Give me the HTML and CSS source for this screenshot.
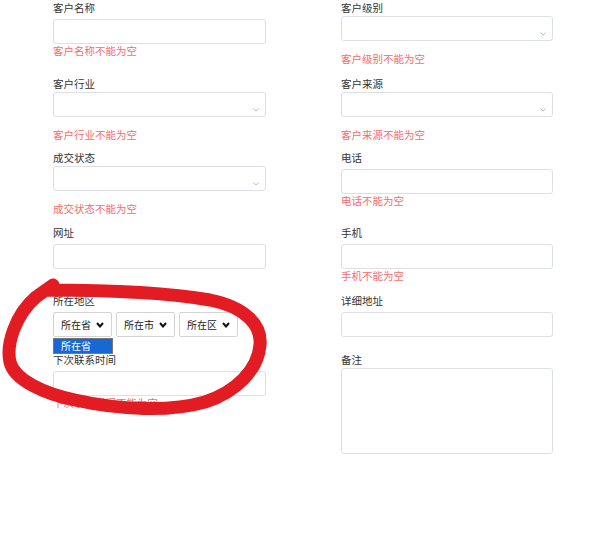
FILE: index.html
```html
<!DOCTYPE html>
<html lang="zh-CN">
<head>
<meta charset="utf-8">
<title>客户信息</title>
<link rel="stylesheet" href="styles.css">
</head>
<body>
<div class="page">
  <form class="form">
    <div class="field">
      <label class="label">客户名称</label>
      <div class="ctl input"></div>
      <div class="err">客户名称不能为空</div>
    </div>
    <div class="field">
      <label class="label">客户级别</label>
      <div class="ctl select"><svg class="arrow" width="6" height="4" viewBox="0 0 6 4"><polyline points="0.5,0.5 3,3.2 5.5,0.5" fill="none" stroke="#b8bcc4" stroke-width="1"/></svg></div>
      <div class="err err-select">客户级别不能为空</div>
    </div>

    <div class="field">
      <label class="label">客户行业</label>
      <div class="ctl select"><svg class="arrow" width="6" height="4" viewBox="0 0 6 4"><polyline points="0.5,0.5 3,3.2 5.5,0.5" fill="none" stroke="#b8bcc4" stroke-width="1"/></svg></div>
      <div class="err err-select">客户行业不能为空</div>
    </div>
    <div class="field">
      <label class="label">客户来源</label>
      <div class="ctl select"><svg class="arrow" width="6" height="4" viewBox="0 0 6 4"><polyline points="0.5,0.5 3,3.2 5.5,0.5" fill="none" stroke="#b8bcc4" stroke-width="1"/></svg></div>
      <div class="err err-select">客户来源不能为空</div>
    </div>

    <div class="field">
      <label class="label">成交状态</label>
      <div class="ctl select"><svg class="arrow" width="6" height="4" viewBox="0 0 6 4"><polyline points="0.5,0.5 3,3.2 5.5,0.5" fill="none" stroke="#b8bcc4" stroke-width="1"/></svg></div>
      <div class="err err-select">成交状态不能为空</div>
    </div>
    <div class="field">
      <label class="label">电话</label>
      <div class="ctl input"></div>
      <div class="err">电话不能为空</div>
    </div>

    <div class="field">
      <label class="label">网址</label>
      <div class="ctl input"></div>
    </div>
    <div class="field">
      <label class="label">手机</label>
      <div class="ctl input"></div>
      <div class="err">手机不能为空</div>
    </div>

    <div class="field">
      <label class="label">所在地区</label>
      <div class="region">
        <div class="rsel"><span>所在省</span><svg width="8" height="6" viewBox="0 0 8 6"><polyline points="1,1 4,4.5 7,1" fill="none" stroke="#111" stroke-width="2"/></svg></div>
        <div class="rsel"><span>所在市</span><svg width="8" height="6" viewBox="0 0 8 6"><polyline points="1,1 4,4.5 7,1" fill="none" stroke="#111" stroke-width="2"/></svg></div>
        <div class="rsel"><span>所在区</span><svg width="8" height="6" viewBox="0 0 8 6"><polyline points="1,1 4,4.5 7,1" fill="none" stroke="#111" stroke-width="2"/></svg></div>
        <div class="dropdown">所在省</div>
      </div>
    </div>
    <div class="field">
      <label class="label">详细地址</label>
      <div class="ctl input"></div>
    </div>

    <div class="field">
      <label class="label">下次联系时间</label>
      <div class="ctl input"></div>
      <div class="err">下次联系时间不能为空</div>
    </div>
    <div class="field">
      <label class="label">备注</label>
      <div class="ctl area"></div>
    </div>
  </form>

  <svg class="scribble" width="613" height="559" viewBox="0 0 613 559">
    <path d="M 46 290 C 110 290, 170 293, 210 300 C 245 307, 262 325, 260 345 C 258 370, 236 392, 205 402 C 170 412, 120 410, 75 400 C 45 394, 14 380, 10 362 C 6 345, 15 315, 36 297 L 53 285" fill="none" stroke="#e31b23" stroke-width="13" stroke-linecap="round" stroke-linejoin="round"/>
  </svg>
</div>
</body>
</html>
```

FILE: styles.css
```css
html, body {
  margin: 0;
  padding: 0;
  background: #ffffff;
}

.page {
  position: relative;
  width: 613px;
  height: 559px;
  font-family: "Noto Sans CJK SC", "Noto Sans", sans-serif;
  font-size: 10.5px;
  color: #333333;
}

.form {
  display: grid;
  grid-template-columns: 213px 212px;
  grid-template-rows: 76px 74px 75px 68px 59px auto;
  column-gap: 75px;
  padding-left: 53px;
}

.field {
  display: flex;
  flex-direction: column;
  min-width: 0;
}

.label {
  display: block;
  line-height: 16px;
  height: 16px;
  color: #333333;
}

.ctl {
  box-sizing: border-box;
  border: 1px solid #dcdfe6;
  border-radius: 3px;
  background: #ffffff;
  height: 25px;
}

.input {
  margin-top: 3px;
}

.select {
  margin-top: 0;
  display: flex;
  justify-content: flex-end;
  align-items: flex-end;
  padding: 0 6px 4px 0;
}

.arrow {
  display: block;
}

.area {
  height: 86px;
  margin-top: 0;
}

.err {
  line-height: 14px;
  color: #f56c6c;
}

.err-select {
  margin-top: 11px;
}

.region {
  position: relative;
  display: flex;
  gap: 4px;
  margin-top: 3px;
}

.rsel {
  box-sizing: border-box;
  width: 59px;
  height: 25px;
  border: 1px solid #d4d4d4;
  border-radius: 2px;
  display: flex;
  align-items: center;
  justify-content: space-between;
  padding: 0 7px 0 7px;
  font-size: 10px;
  color: #222222;
}

.rsel svg {
  display: block;
}

.dropdown {
  position: absolute;
  left: 0;
  top: 26px;
  box-sizing: border-box;
  width: 60px;
  height: 16px;
  border: 1px solid #767676;
  background: #1967d2;
  color: #ffffff;
  font-size: 10px;
  line-height: 14px;
  padding-left: 7px;
}

.scribble {
  position: absolute;
  left: 0;
  top: 0;
  pointer-events: none;
}
```
